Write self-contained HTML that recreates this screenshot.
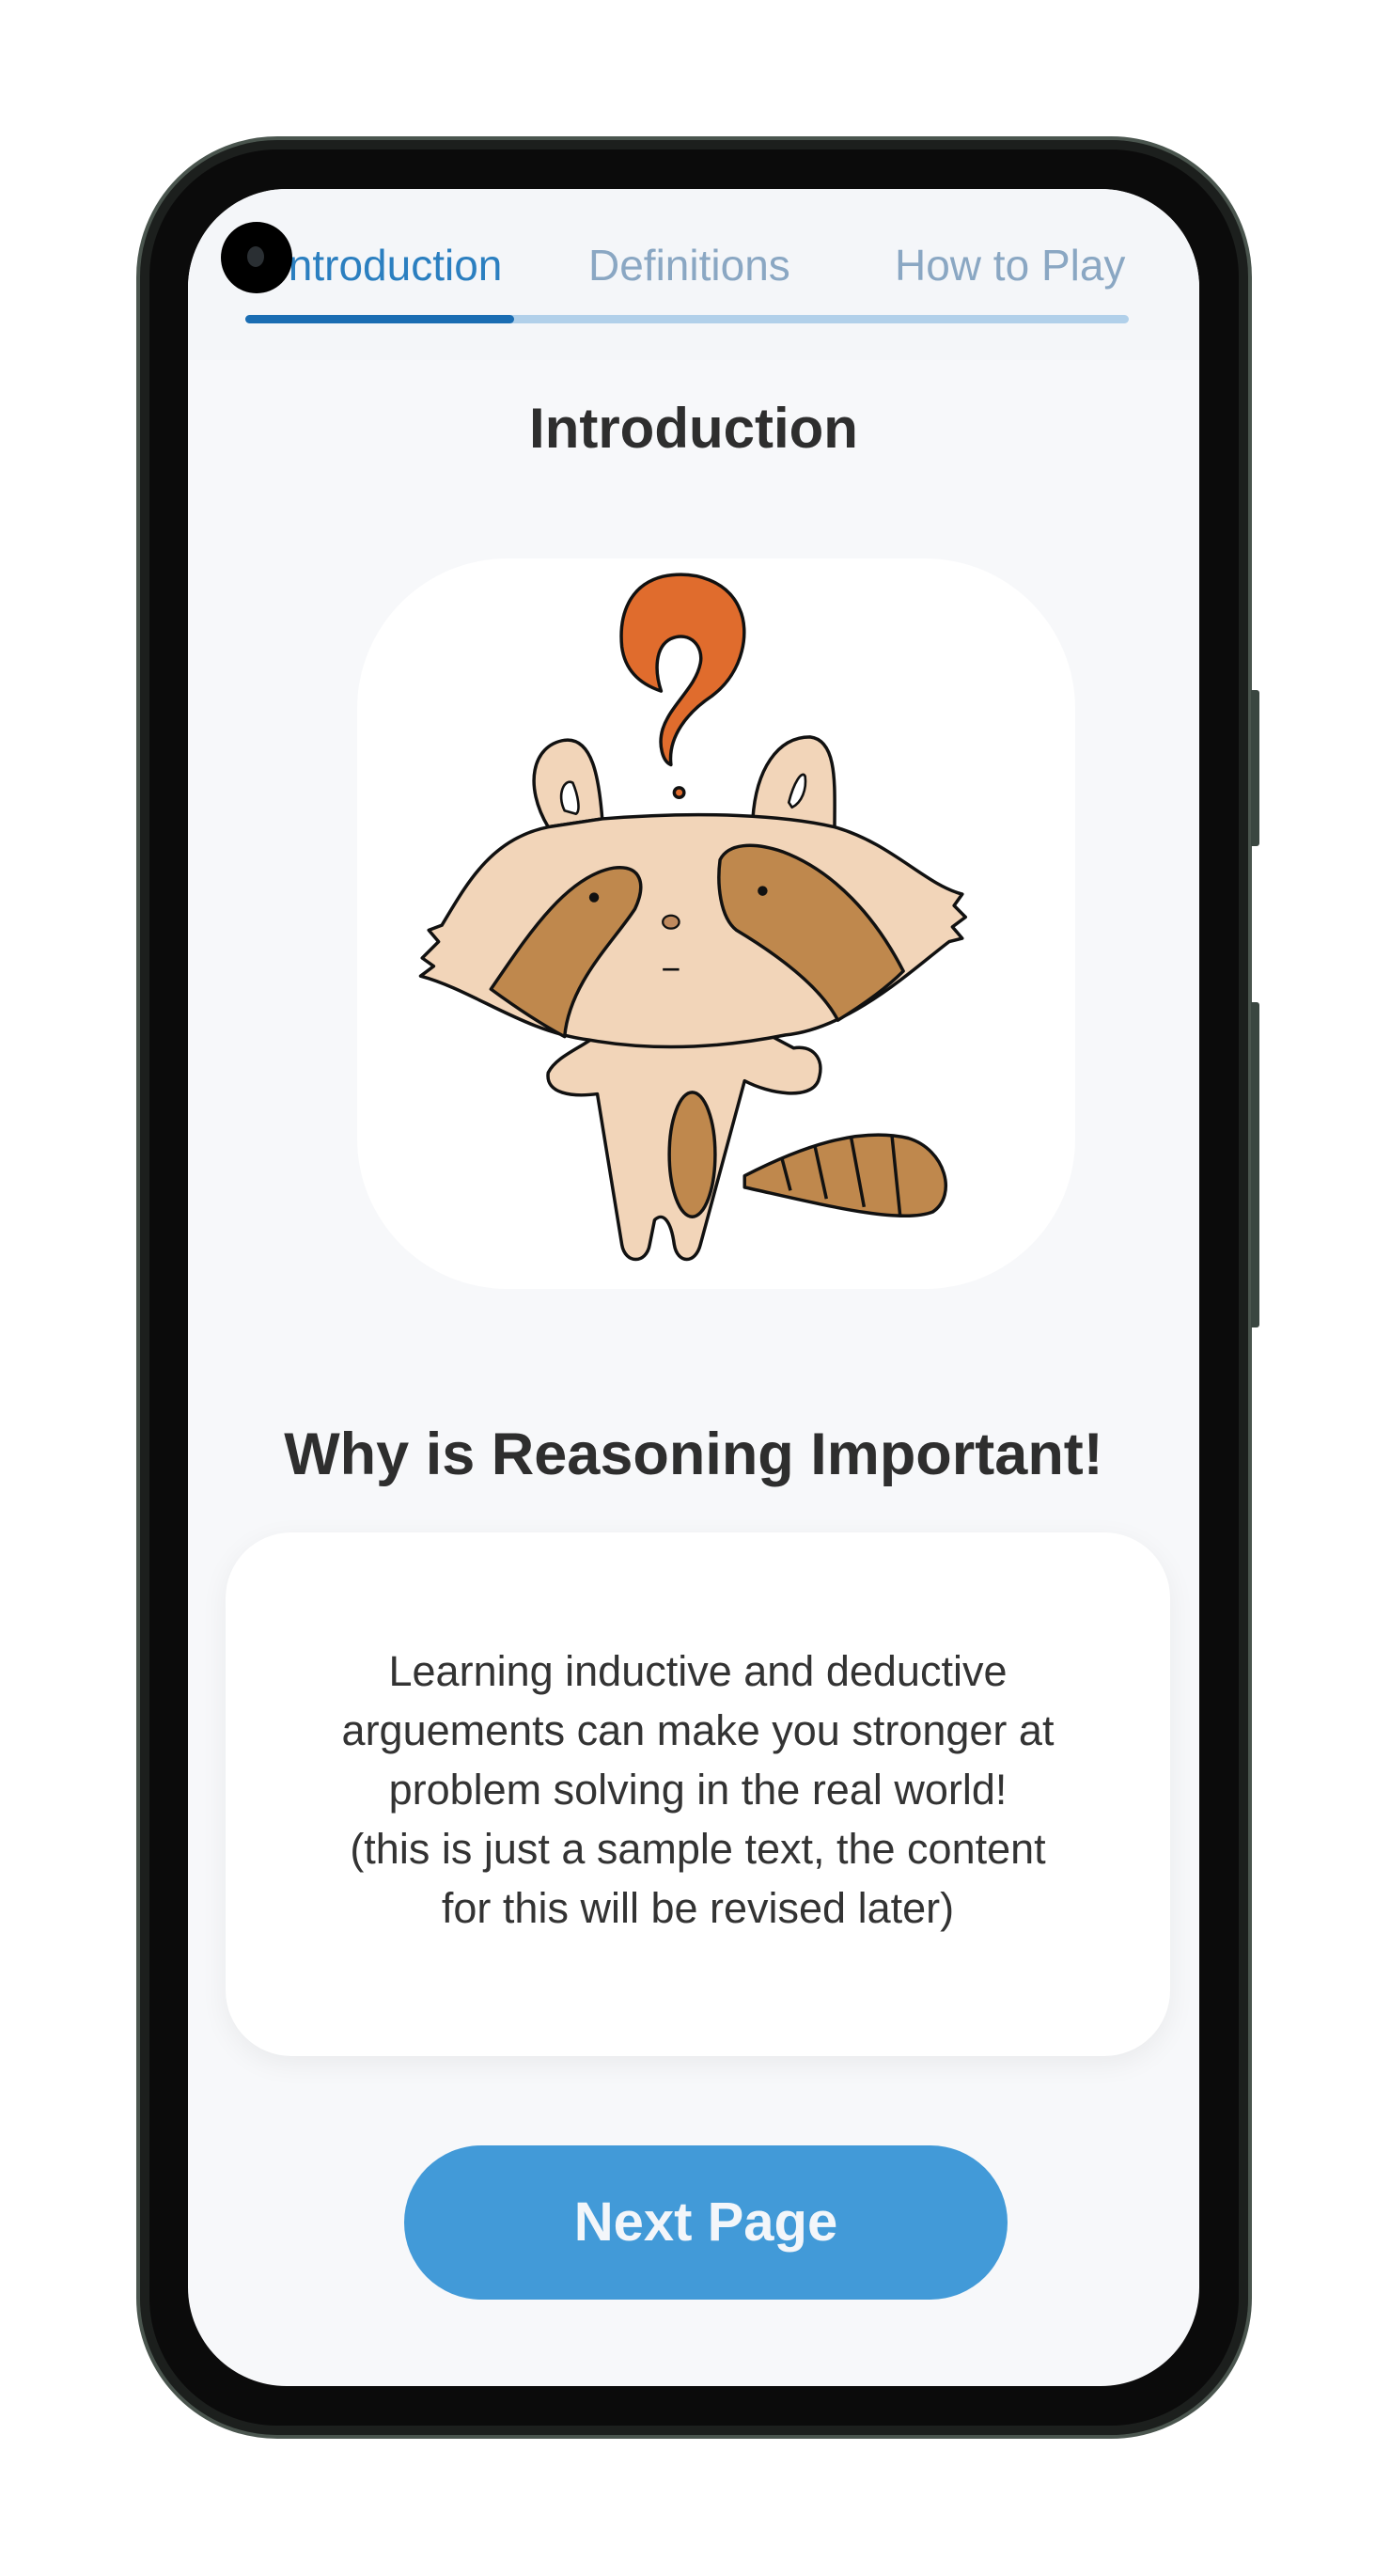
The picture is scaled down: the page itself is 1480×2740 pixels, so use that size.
<!DOCTYPE html>
<html><head><meta charset="utf-8"><style>
html,body{margin:0;padding:0;background:#fff;}
body{width:1480px;height:2740px;position:relative;overflow:hidden;font-family:"Liberation Sans",sans-serif;}
.phone{position:absolute;left:145px;top:145px;width:1187px;height:2449px;border-radius:150px;background:#0b0b0b;border:4px solid #4a554e;box-sizing:border-box;box-shadow:inset 0 0 0 10px #1c1f1d;}
.screen{position:absolute;left:200px;top:201px;width:1076px;height:2337px;border-radius:105px;background:#f7f8fa;overflow:hidden;}
.btn-side{position:absolute;left:1331px;width:9px;background:#3a4640;border-radius:0 3px 3px 0;}
.tabs{position:absolute;left:0;top:0;width:100%;height:182px;background:#f4f6f9;}
.tab{position:absolute;top:54px;font-size:46px;color:#8aa7c3;}
.bar{position:absolute;left:61px;top:134px;width:940px;height:9px;border-radius:5px;background:#b1d0ea;}
.bar i{position:absolute;left:0;top:0;width:286px;height:9px;border-radius:5px;background:#1a6db3;}
.h1{position:absolute;left:0;width:100%;text-align:center;font-weight:bold;color:#2e2e2e;}
.card{position:absolute;background:#fff;}
.txt{position:absolute;left:40px;top:1545px;width:1005px;text-align:center;font-size:45px;line-height:63px;color:#333;}
.next{position:absolute;left:230px;top:2081px;width:642px;height:164px;border-radius:82px;background:#429ad8;color:#f3f6fa;font-weight:bold;font-size:58px;text-align:center;line-height:164px;}
.cam{position:absolute;left:235px;top:236px;width:76px;height:76px;border-radius:50%;background:#000;}
.cam i{position:absolute;left:28px;top:26px;width:18px;height:22px;border-radius:50%;background:#2a2f33;}
</style></head><body>
<div class="phone"></div>
<div class="btn-side" style="top:734px;height:166px"></div>
<div class="btn-side" style="top:1066px;height:346px"></div>
<div class="screen">
 <div class="tabs">
  <div class="tab" style="left:94px;color:#2b7fc0">Introduction</div>
  <div class="tab" style="left:426px">Definitions</div>
  <div class="tab" style="left:752px">How to Play</div>
  <div class="bar"><i></i></div>
 </div>
 <div class="h1" style="top:220px;font-size:60px">Introduction</div>
 <div class="card" style="left:180px;top:393px;width:764px;height:777px;border-radius:160px"></div>
 <div class="h1" style="top:1310px;font-size:63px">Why is Reasoning Important!</div>
 <div class="card" style="left:40px;top:1429px;width:1005px;height:557px;border-radius:70px;box-shadow:0 8px 30px rgba(0,0,0,0.06)"></div>
 <div class="txt">Learning inductive and deductive<br>arguements can make you stronger at<br>problem solving in the real world!<br>(this is just a sample text, the content<br>for this will be revised later)</div>
 <div class="next">Next Page</div>
</div>
<div class="cam"><i></i></div>
<svg style="position:absolute;left:0;top:0" width="1480" height="2740" viewBox="0 0 850 1573" preserveAspectRatio="none">
 <g stroke="#111" stroke-width="2" stroke-linejoin="round">
  <path d="M410 467 C408 450 420 435 435 425 C455 410 458 385 452 372 C445 355 425 348 405 352 C385 357 378 375 380 395 C382 410 392 418 404 422 C400 410 400 395 410 390 C422 385 430 395 428 405 C425 420 410 430 405 445 C402 455 405 465 410 467 Z" fill="#e06c2d"/>
  <circle cx="415" cy="484" r="3" fill="#e06c2d"/>
  <path d="M455 718 C490 700 525 688 555 695 C578 702 585 730 570 740 C550 748 500 735 455 725 Z" fill="#bf884d"/>
  <path d="M478 708 L483 727 M498 700 L505 732 M520 694 L528 737 M545 693 L550 742" fill="none"/>
  <path d="M365 632 C355 640 340 645 335 655 C333 668 350 670 365 668 L380 760 C382 772 395 772 397 760 L400 745 C405 740 410 745 412 760 C414 772 425 772 428 760 L455 660 C470 668 495 672 500 660 C505 645 495 638 485 640 L470 632 Z" fill="#f2d5b9"/>
  <ellipse cx="423" cy="705" rx="14" ry="38" fill="#bf884d"/>
  <path d="M335 505 C320 480 325 455 345 452 C362 450 366 475 368 500 Z" fill="#f2d5b9"/>
  <path d="M460 500 C462 470 475 450 495 450 C512 452 510 480 510 505 Z" fill="#f2d5b9"/>
  <path d="M345 495 C340 485 345 475 350 478 C353 485 355 495 352 497 Z" fill="#fff" stroke-width="1.5"/>
  <path d="M482 490 C485 478 490 470 492 474 C493 482 490 490 484 493 Z" fill="#fff" stroke-width="1.5"/>
  <path d="M335 505 C300 512 285 540 270 565 L262 568 L268 575 L258 585 L265 590 L257 596 C290 605 320 630 360 635 C400 642 440 640 480 632 C520 628 560 590 580 575 L588 573 L582 566 L590 560 L583 553 L588 546 C565 540 545 515 510 505 C480 498 430 495 368 500 Z" fill="#f2d5b9"/>
  <path d="M300 604 C320 575 345 535 375 530 C392 528 395 540 388 555 C375 575 348 600 345 633 C330 625 315 615 300 604 Z" fill="#bf884d"/>
  <path d="M440 525 C445 515 460 514 478 520 C510 532 535 560 552 593 C540 605 525 615 512 623 C500 600 470 580 450 568 C440 560 438 540 440 525 Z" fill="#bf884d"/>
 </g>
 <circle cx="363" cy="548" r="3" fill="#111"/>
 <circle cx="466" cy="544" r="3" fill="#111"/>
 <ellipse cx="410" cy="563" rx="5" ry="4" fill="#c08a5e" stroke="#111" stroke-width="1.3"/>
 <path d="M405 592 L415 592" stroke="#111" stroke-width="1.5"/>
</svg>
</body></html>
